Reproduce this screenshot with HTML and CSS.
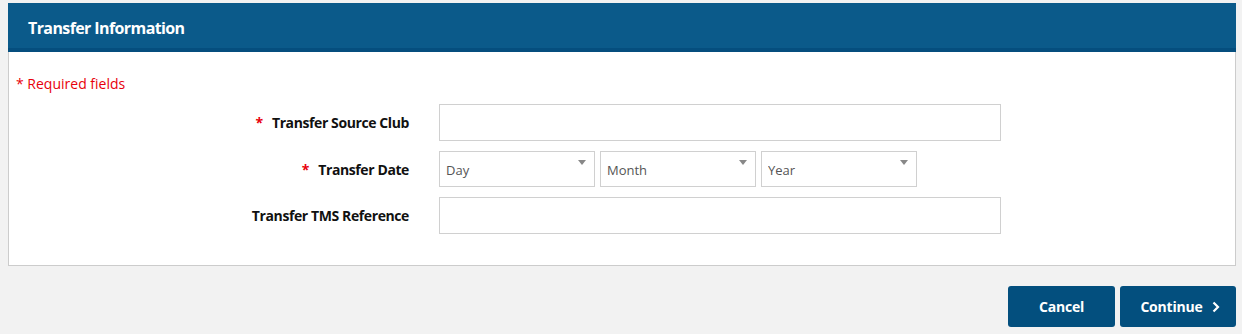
FILE: index.html
```html
<!DOCTYPE html>
<html lang="en">
<head>
  <meta charset="UTF-8">
  <title>Transfer Information</title>
  <link rel="stylesheet" href="styles.css">
</head>
<body>

  <div class="panel">
    <div class="panel-heading">Transfer Information</div>

    <div class="panel-body">
      <p class="required-note"><span class="star">*</span> Required fields</p>

      <!-- Transfer form -->
      <form class="transfer-form">
        <div class="form-row">
          <label class="form-label" for="source-club"><span class="star">*</span> Transfer Source Club</label>
          <input type="text" id="source-club" class="text-input" />
        </div>

        <div class="form-row">
          <label class="form-label"><span class="star">*</span> Transfer Date</label>
          <div class="date-group">
            <span class="select-wrap">
              <select class="date-select">
                <option>Day</option>
              </select>
            </span>
            <span class="select-wrap">
              <select class="date-select">
                <option>Month</option>
              </select>
            </span>
            <span class="select-wrap">
              <select class="date-select">
                <option>Year</option>
              </select>
            </span>
          </div>
        </div>

        <div class="form-row">
          <label class="form-label" for="tms-ref">Transfer TMS Reference</label>
          <input type="text" id="tms-ref" class="text-input" />
        </div>
      </form>
    </div>
  </div>

  <div class="actions">
    <button type="button" class="btn btn-cancel">Cancel</button>
    <button type="button" class="btn btn-continue">Continue
      <svg class="chevron" width="8" height="12" viewBox="0 0 8 12">
        <path d="M1.5 1.5 L6 6 L1.5 10.5" fill="none" stroke="#ffffff" stroke-width="2.2" />
      </svg>
    </button>
  </div>

</body>
</html>
```

FILE: styles.css
```css
* {
  box-sizing: border-box;
  margin: 0;
  padding: 0;
}

body {
  font-family: 'Open Sans', 'Liberation Sans', sans-serif;
  background: #f2f2f2;
  color: #222222;
  padding: 3px 6px 0 8px;
}

.panel {
  width: 1228px;
}

.panel-heading {
  background: #0b5a8a;
  border-bottom: 4px solid #054e7e;
  color: #ffffff;
  font-size: 16px;
  font-weight: 700;
  height: 49px;
  padding: 14px 20px 0;
  letter-spacing: -0.6px;
}

.panel-body {
  background: #ffffff;
  border: 1px solid #cccccc;
  border-top: none;
  padding: 23px 0 31px 0;
}

.required-note {
  color: #e8000b;
  font-size: 14px;
  line-height: 18px;
  margin-bottom: 11px;
  padding-left: 7px;
}

.star {
  color: #e8000b;
}

.form-row {
  display: flex;
  align-items: center;
  margin-bottom: 10px;
}

.form-row:last-child {
  margin-bottom: 0;
}

.form-label {
  width: 400px;
  text-align: right;
  font-size: 14px;
  font-weight: 700;
  color: #111111;
  letter-spacing: -0.4px;
  margin-right: 30px;
}

.form-label .star {
  margin-right: 6px;
}

.text-input {
  width: 562px;
  height: 37px;
  border: 1px solid #d0d0d0;
  background: #ffffff;
  padding: 0 8px;
  font-family: inherit;
  font-size: 13px;
}

.date-group {
  display: flex;
  gap: 5px;
}

.select-wrap {
  position: relative;
  display: block;
}

.select-wrap::after {
  content: "";
  position: absolute;
  right: 9px;
  top: 9px;
  border-left: 4px solid transparent;
  border-right: 4px solid transparent;
  border-top: 5px solid #888888;
}

.date-select {
  appearance: none;
  -webkit-appearance: none;
  width: 156px;
  height: 36px;
  border: 1px solid #d0d0d0;
  border-radius: 0;
  background: #ffffff;
  color: #555555;
  font-family: inherit;
  font-size: 13px;
  padding: 2px 6px 0;
}

.actions {
  display: flex;
  justify-content: flex-end;
  gap: 5px;
  margin-top: 20px;
  width: 1228px;
}

.btn {
  height: 41px;
  border: none;
  border-radius: 3px;
  background: #034f7e;
  color: #ffffff;
  font-family: inherit;
  font-size: 14px;
  font-weight: 700;
  letter-spacing: -0.2px;
  white-space: nowrap;
  cursor: pointer;
  display: flex;
  align-items: center;
  justify-content: center;
}

.btn-cancel {
  width: 107px;
}

.btn-continue {
  width: 116px;
  gap: 9px;
  padding-left: 4px;
}

.chevron {
  display: block;
}
```
